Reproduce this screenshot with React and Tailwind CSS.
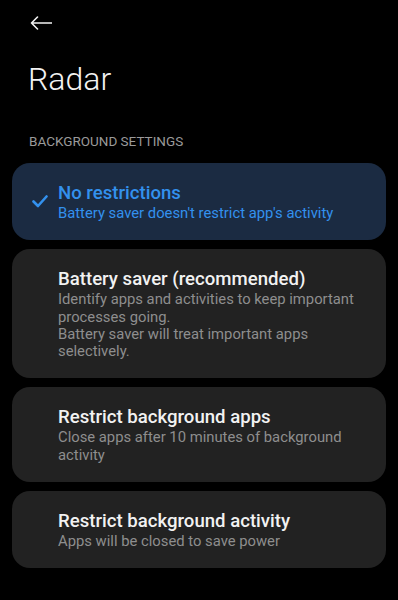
const OPTIONS = [
  {
    title: 'No restrictions',
    desc: ["Battery saver doesn't restrict app's activity"],
    selected: true,
  },
  {
    title: 'Battery saver (recommended)',
    desc: [
      'Identify apps and activities to keep important processes going.',
      'Battery saver will treat important apps selectively.',
    ],
  },
  {
    title: 'Restrict background apps',
    desc: ['Close apps after 10 minutes of background activity'],
  },
  {
    title: 'Restrict background activity',
    desc: ['Apps will be closed to save power'],
  },
]

function Check() {
  return (
    <svg width="16" height="13" viewBox="0 0 16 13" fill="none" aria-hidden="true">
      <path d="M1.5 6.5 L6 11 L14.5 1.5" stroke="#3391ee" strokeWidth="2.6" strokeLinecap="round" strokeLinejoin="round" />
    </svg>
  )
}

export default function App() {
  return (
    <div className="min-h-[600px] bg-black text-white font-['Roboto','Noto_Sans',sans-serif] pb-8">
      <div className="px-[30px] pt-4">
        <svg width="22" height="14" viewBox="0 0 22 14" fill="none" className="block" aria-label="Back">
          <path d="M21.5 7 H1.5 M7.5 1 L1.5 7 L7.5 13" stroke="#f2f2f2" strokeWidth="1.6" strokeLinecap="round" strokeLinejoin="round" />
        </svg>
        <h1 className="mt-[29px] -ml-[2px] text-[32px] leading-[40px] font-light text-[#f2f2f2]">Radar</h1>
        <p className="mt-[34px] -ml-px text-[13.5px] leading-4 text-[#9a9a9a] uppercase">Background settings</p>
      </div>

      <div className="mt-[14px] px-3 flex flex-col gap-[9px]">
        {OPTIONS.map((o) => (
          <div
            key={o.title}
            className={`flex rounded-[18px] py-[18px] pr-6 ${o.selected ? 'bg-[#1b2b42]' : 'bg-[#222222]'}`}
          >
            <div className="w-[46px] shrink-0 flex items-center pl-5">
              {o.selected && <Check />}
            </div>
            <div className="flex-1 min-w-0">
              <p className={`text-[18.6px] leading-6 font-medium ${o.selected ? 'text-[#3391ee]' : 'text-[#f2f2f2]'}`}>
                {o.title}
              </p>
              {o.desc.map((d) => (
                <p
                  key={d}
                  className={`text-[14.8px] leading-[17.25px] ${o.selected ? 'text-[#3391ee]' : 'text-[#8e8e8e]'}`}
                >
                  {d}
                </p>
              ))}
            </div>
          </div>
        ))}
      </div>
    </div>
  )
}
